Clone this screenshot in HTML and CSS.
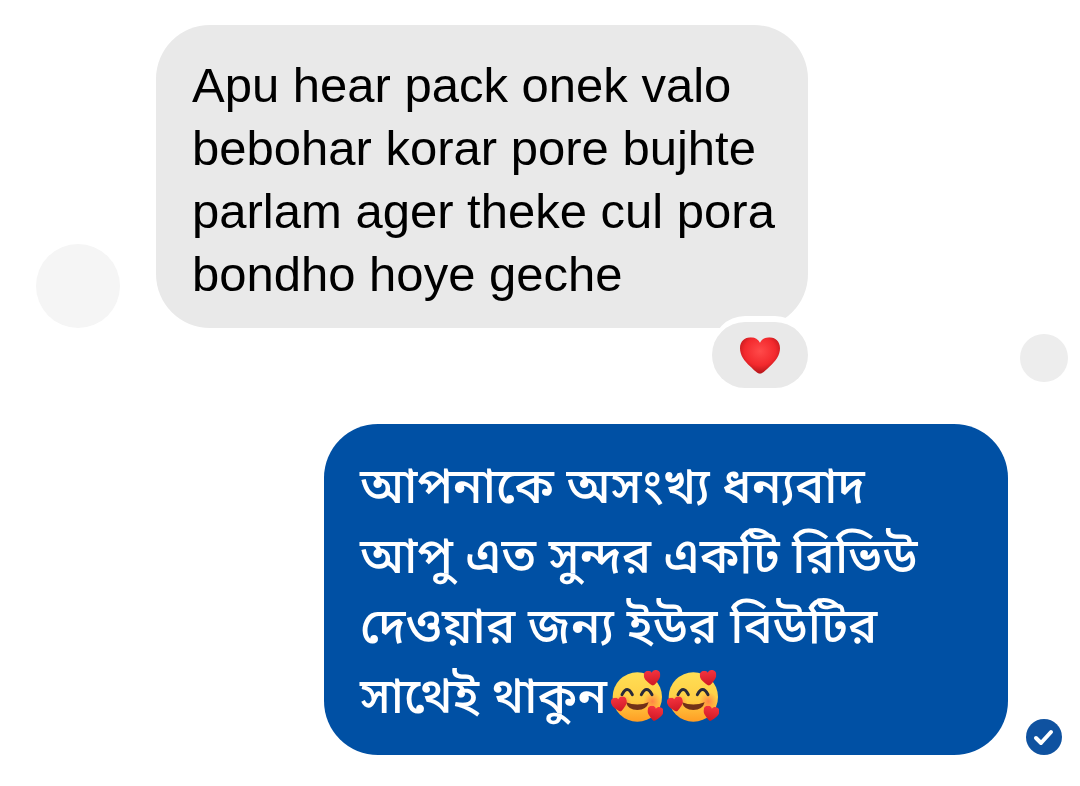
FILE: index.html
```
<!DOCTYPE html>
<html lang="bn">
<head>
    <meta charset="UTF-8">
    <meta name="viewport" content="width=device-width, initial-scale=1.0">
    <title>Chat</title>
    <link rel="stylesheet" href="styles.css">
</head>
<body>
    <!-- Shared emoji artwork -->
    <svg class="defs" width="0" height="0" aria-hidden="true">
        <defs>
            <radialGradient id="red" cx="50%" cy="38%" r="65%">
                <stop offset="0" stop-color="#ff4a4a"/>
                <stop offset=".6" stop-color="#f3292d"/>
                <stop offset="1" stop-color="#a81216"/>
            </radialGradient>
            <linearGradient id="small-red" x1="0" y1="0" x2="0" y2="1">
                <stop offset="0" stop-color="#f4343f"/>
                <stop offset="1" stop-color="#cf1724"/>
            </linearGradient>
            <linearGradient id="face" x1="0" y1="0" x2="0" y2="1">
                <stop offset="0" stop-color="#ffdf55"/>
                <stop offset=".55" stop-color="#ffce45"/>
                <stop offset="1" stop-color="#ff9d24"/>
            </linearGradient>
            <radialGradient id="blush">
                <stop offset="0" stop-color="#ff6548" stop-opacity=".7"/>
                <stop offset="1" stop-color="#ff7b3d" stop-opacity="0"/>
            </radialGradient>
            <symbol id="heart" viewBox="0 0 120 110">
                <path d="M60 110C54 110 42 99 31 88C13 71 0 54 0 33C0 13 14 0 32 0C45 0 55 6 60 17C65 6 75 0 88 0C106 0 120 13 120 33C120 54 107 71 89 88C78 99 66 110 60 110Z"/>
            </symbol>
            <symbol id="hearts-face" viewBox="0 0 156 156">
                <circle cx="79" cy="81" r="74" fill="url(#face)"/>
                <ellipse cx="34" cy="96" rx="27" ry="22" fill="url(#blush)"/>
                <ellipse cx="124" cy="94" rx="27" ry="28" fill="url(#blush)"/>
                <path d="M33 74Q49 43 64 74M91 74Q107 43 123 74" fill="none" stroke="#292a3a" stroke-width="9" stroke-linecap="round"/>
                <path d="M45 97Q79 110 113 97Q107 120 79 120Q51 120 45 97Z" fill="#713018"/>
                <g fill="url(#small-red)">
                    <use href="#heart" x="-25" y="-23" width="50" height="46" transform="translate(124 24) rotate(-6)"/>
                    <use href="#heart" x="-24" y="-22" width="48" height="44" transform="translate(25 103) rotate(-10)"/>
                    <use href="#heart" x="-24" y="-22" width="48" height="44" transform="translate(132 131) rotate(10)"/>
                </g>
            </symbol>
        </defs>
    </svg>

    <main class="chat">
        <div class="row received">
            <div class="avatar"></div>
            <div class="message">
                <p class="bubble" lang="bn-Latn">Apu hear pack onek valo<br>bebohar korar pore bujhte<br>parlam ager theke cul pora<br>bondho hoye geche</p>
                <button class="reaction" type="button" aria-label="Love"><svg viewBox="0 0 120 110"><use href="#heart" fill="url(#red)"/></svg></button>
            </div>
            <button class="action" type="button" aria-label="Share"></button>
        </div>
        <div class="row sent">
            <p class="bubble">আপনাকে অসংখ্য ধন্যবাদ<br>আপু এত সুন্দর একটি রিভিউ<br>দেওয়ার জন্য ইউর বিউটির<br>সাথেই থাকুন<svg class="emoji" role="img" aria-label="🥰"><use href="#hearts-face"/></svg><svg class="emoji" role="img" aria-label="🥰"><use href="#hearts-face"/></svg></p>
            <svg class="status" viewBox="0 0 36 36" role="img" aria-label="Delivered">
                <circle cx="18" cy="18" r="18" fill="#0f52a0"/>
                <path d="M10 19L15 24L25 13" fill="none" stroke="#fff" stroke-width="4" stroke-linecap="round" stroke-linejoin="round"/>
            </svg>
        </div>
    </main>
</body>
</html>
```
FILE: styles.css
```
*{margin:0;padding:0;box-sizing:border-box}
body{background:#fff;color:#000;font-family:"Liberation Sans",Arial,sans-serif}
button{border:none;cursor:pointer}
.defs{position:absolute}
.chat{padding:25px 12px 31px 36px}
.row{display:flex;align-items:flex-end}
.bubble{padding:25px 36px 26px;border-radius:54px}

/* Received */
.received{gap:36px}
.avatar{flex:none;width:84px;height:84px;margin-bottom:60px;border-radius:50%;background:#f5f5f5}
.message{display:flex;flex-direction:column;align-items:flex-end}
.received .bubble{padding:29px 33px 22px 36px;background:#e9e9e9;font-size:49px;line-height:63px}
.reaction{display:flex;align-items:center;justify-content:center;width:96px;height:66px;margin-top:-6px;border-radius:36px;background:#e9e9e9;box-shadow:0 -6px 0 #fff}
.reaction svg{width:40px;height:37px}
.action{flex:none;width:48px;height:48px;margin:0 0 6px auto;border-radius:50%;background:#ededed}

/* Sent */
.sent{justify-content:flex-end;gap:18px;margin-top:36px}
.sent .bubble{flex:0 1 684px;background:#0050a4;color:#fff;font-family:"Noto Sans","Noto Sans Bengali",sans-serif;font-size:49px;font-weight:500;line-height:70px}
.emoji{width:52px;height:52px;margin-left:4px;vertical-align:-9px}
.status{flex:none;width:36px;height:36px;margin-right:6px}
```
